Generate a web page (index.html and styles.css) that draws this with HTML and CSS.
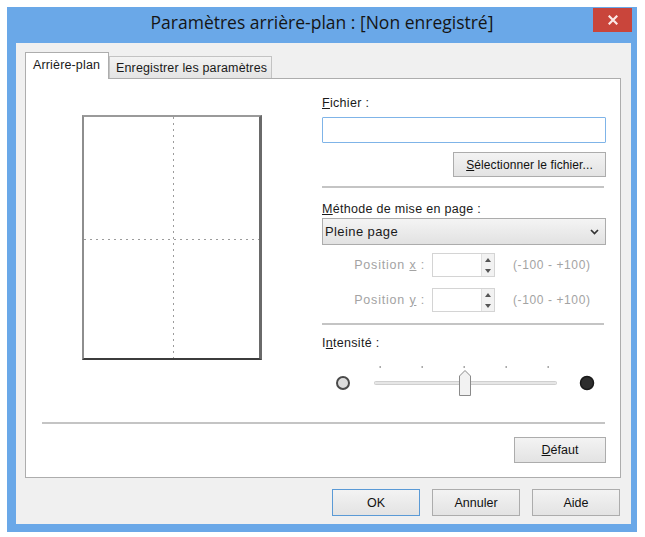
FILE: index.html
```html
<!DOCTYPE html>
<html lang="fr">
<head>
<meta charset="utf-8">
<title>Paramètres arrière-plan</title>
<link rel="stylesheet" href="styles.css">
</head>
<body>
<div class="window">
  <div class="titlebar">
    <div></div>
    <div class="title">Paramètres arrière-plan : [Non enregistré]</div>
    <div class="close">
      <svg width="10" height="10" viewBox="0 0 10 10"><path d="M1.5 1.5 L8.5 8.5 M8.5 1.5 L1.5 8.5" stroke="#fbe9e7" stroke-width="2.2" stroke-linecap="square"/></svg>
    </div>
  </div>
  <div class="client">
    <div class="tabs">
      <div class="tab active">Arrière-plan</div>
      <div class="tab">Enregistrer les paramètres</div>
    </div>
    <div class="panel">
      <div class="top">
        <div class="preview-col">
          <div class="page"></div>
        </div>
        <div class="right-col">
          <div class="label"><u>F</u>ichier :</div>
          <div class="input"></div>
          <div class="btn btn-file"><span><u>S</u>électionner le fichier...</span></div>
          <div class="sep sep-a"></div>
          <div class="label label-method"><u>M</u>éthode de mise en page :</div>
          <div class="select">
            <span>Pleine page</span>
            <svg width="9" height="6" viewBox="0 0 9 6"><path d="M1 1 L4.5 4.5 L8 1" fill="none" stroke="#333" stroke-width="1.7"/></svg>
          </div>
          <div class="pos-row pos-x">
            <span class="pos-label">Position <u>x</u> :</span>
            <div class="spin">
              <div class="spin-field"></div>
              <div class="spin-btns">
                <span><svg width="6" height="4" viewBox="0 0 6 4"><path d="M0 4 L3 0 L6 4 Z" fill="#555"/></svg></span>
                <span><svg width="6" height="4" viewBox="0 0 6 4"><path d="M0 0 L3 4 L6 0 Z" fill="#555"/></svg></span>
              </div>
            </div>
            <span class="range">(-100 - +100)</span>
          </div>
          <div class="pos-row pos-y">
            <span class="pos-label">Position <u>y</u> :</span>
            <div class="spin">
              <div class="spin-field"></div>
              <div class="spin-btns">
                <span><svg width="6" height="4" viewBox="0 0 6 4"><path d="M0 4 L3 0 L6 4 Z" fill="#555"/></svg></span>
                <span><svg width="6" height="4" viewBox="0 0 6 4"><path d="M0 0 L3 4 L6 0 Z" fill="#555"/></svg></span>
              </div>
            </div>
            <span class="range">(-100 - +100)</span>
          </div>
          <div class="sep sep-b"></div>
          <div class="label label-int">I<u>n</u>tensité :</div>
          <svg class="slider" width="284" height="40" viewBox="0 0 284 40">
            <g fill="#a0a0a0">
              <rect x="57.5" y="6" width="1.4" height="2"/>
              <rect x="99.5" y="6" width="1.4" height="2"/>
              <rect x="141.5" y="6" width="1.4" height="2"/>
              <rect x="183.5" y="6" width="1.4" height="2"/>
              <rect x="225.5" y="6" width="1.4" height="2"/>
            </g>
            <rect x="52.5" y="21.5" width="182" height="3" rx="1" fill="#e6e6e6" stroke="#cfcfcf"/>
            <circle cx="21" cy="23" r="6" fill="#dcdcdc" stroke="#4a4a4a" stroke-width="2"/>
            <circle cx="265" cy="23" r="6.5" fill="#2e2e2e" stroke="#1a1a1a" stroke-width="1.5"/>
            <path d="M137.5 35.5 L137.5 16 L143 10.5 L148.5 16 L148.5 35.5 Z" fill="#f2f2f2" stroke="#8a8a8a"/>
          </svg>
        </div>
      </div>
      <div class="sep sep-bottom"></div>
      <div class="btn btn-default"><span><u>D</u>éfaut</span></div>
    </div>
    <div class="buttons">
      <div class="btn btn-main btn-ok">OK</div>
      <div class="btn btn-main">Annuler</div>
      <div class="btn btn-main">Aide</div>
    </div>
  </div>
</div>
</body>
</html>
```

FILE: styles.css
```css
* { box-sizing: border-box; }

body {
  margin: 0;
  background: #ffffff;
  font-family: "Liberation Sans", Arial, sans-serif;
  font-size: 12.5px;
  color: #1a1a1a;
}

u { text-decoration: underline; text-underline-offset: 1px; }

.window {
  margin: 7px 0 0 7px;
  width: 630px;
  height: 525px;
  background: #6aa8e8;
  display: flex;
  flex-direction: column;
}

.titlebar {
  height: 36px;
  flex: 0 0 36px;
  display: grid;
  grid-template-columns: 1fr auto 1fr;
  align-items: start;
}

.title {
  font-family: "Open Sans", "Liberation Sans", sans-serif;
  font-size: 17.5px;
  line-height: 22px;
  margin-top: 4px;
  color: #151515;
  white-space: nowrap;
}

.close {
  justify-self: end;
  width: 39px;
  height: 24px;
  margin-top: 1px;
  margin-right: 5px;
  background: #c9453b;
  display: flex;
  align-items: center;
  justify-content: center;
}

.client {
  flex: 1;
  margin: 0 6px 8px 9px;
  background: #f0f0f0;
  padding: 9px 10px 0 9px;
  display: flex;
  flex-direction: column;
}

.tabs {
  height: 26px;
  flex: 0 0 26px;
  display: flex;
  align-items: flex-end;
}

.tab {
  height: 22px;
  padding: 0 4px 0 6px;
  display: flex;
  align-items: center;
  font-size: 12.5px;
  letter-spacing: 0.15px;
  white-space: nowrap;
  border: 1px solid #c3c3c3;
  border-bottom: none;
  background: linear-gradient(#f3f3f3, #e4e4e4);
  color: #1a1a1a;
}

.tab.active {
  height: 27px;
  width: 84px;
  margin-bottom: -1px;
  padding: 0 0 2px 7px;
  background: #ffffff;
  border-color: #adadad;
  position: relative;
  z-index: 1;
}

.panel {
  flex: 1;
  background: #ffffff;
  border: 1px solid #adadad;
  padding: 0 14px 14px 0;
  display: flex;
  flex-direction: column;
}

.top {
  display: grid;
  grid-template-columns: 1fr 284px;
}

.preview-col { padding: 36px 0 0 56px; }

.page {
  width: 180px;
  height: 245px;
  border-left: 2px solid #8e8e8e;
  border-top: 2px solid #9a9a9a;
  border-right: 3px solid #6a6a6a;
  border-bottom: 2px solid #3c3c3c;
  background-color: #ffffff;
  background-image:
    linear-gradient(to bottom, #9c9c9c 40%, transparent 40%),
    linear-gradient(to right, #9c9c9c 40%, transparent 40%);
  background-size: 1px 6px, 6px 1px;
  background-repeat: repeat-y, repeat-x;
  background-position: 89px 0, 0 122px;
}

.right-col {
  display: flex;
  flex-direction: column;
}

.label {
  height: 14px;
  line-height: 14px;
  margin-top: 17px;
  letter-spacing: 0.3px;
  white-space: nowrap;
}

.input {
  margin-top: 7px;
  height: 26px;
  border: 1px solid #7fb4e8;
  border-radius: 1px;
  background: #ffffff;
}

.btn {
  display: flex;
  align-items: center;
  justify-content: center;
  border: 1px solid #acacac;
  background: linear-gradient(#f3f3f3, #e3e3e3);
  font-size: 12.5px;
  color: #111;
  white-space: nowrap;
}

.btn-file {
  align-self: flex-end;
  margin-top: 9px;
  width: 153px;
  height: 25px;
  font-size: 12px;
  letter-spacing: 0.1px;
}

.sep {
  height: 2px;
  background: #c4c4c4;
}

.sep-a { margin-top: 9px; margin-right: 2px; }

.label-method { margin-top: 14px; }

.select {
  margin-top: 2px;
  height: 27px;
  border: 1px solid #acacac;
  background: linear-gradient(#f4f4f4, #e2e2e2);
  display: flex;
  align-items: center;
  justify-content: space-between;
  padding: 0 6px 0 2px;
  font-size: 13px;
  letter-spacing: 0.4px;
}

.pos-row {
  height: 24px;
  display: flex;
  align-items: center;
  color: #a3a3a3;
}

.pos-x { margin-top: 8px; }
.pos-y { margin-top: 11px; }

.pos-label {
  width: 103px;
  text-align: right;
  font-size: 12.5px;
  letter-spacing: 0.8px;
  white-space: nowrap;
}

.spin {
  margin-left: 7px;
  width: 63px;
  height: 24px;
  border: 1px solid #d4d4d4;
  background: #ffffff;
  display: flex;
}

.spin-field { flex: 1; }

.spin-btns {
  width: 13px;
  display: flex;
  flex-direction: column;
  border-left: 1px solid #e0e0e0;
  background: #f2f2f2;
}

.spin-btns span {
  flex: 1;
  display: flex;
  align-items: center;
  justify-content: center;
}

.range {
  margin-left: 18px;
  font-size: 12px;
  letter-spacing: 0.6px;
  white-space: nowrap;
}

.sep-b { margin-top: 11px; margin-right: 2px; }

.label-int { margin-top: 11px; }

.slider {
  display: block;
  margin-top: 10px;
}

.sep-bottom {
  margin-top: auto;
  margin-left: 16px;
  margin-right: 1px;
}

.btn-default {
  align-self: flex-end;
  margin-top: 13px;
  width: 92px;
  height: 26px;
}

.buttons {
  margin: 11px 1px 8px 0;
  height: 27px;
  display: flex;
  justify-content: flex-end;
  gap: 12px;
}

.btn-main {
  width: 88px;
  height: 27px;
}

.btn-ok {
  border-color: #5a9ad6;
}
```
